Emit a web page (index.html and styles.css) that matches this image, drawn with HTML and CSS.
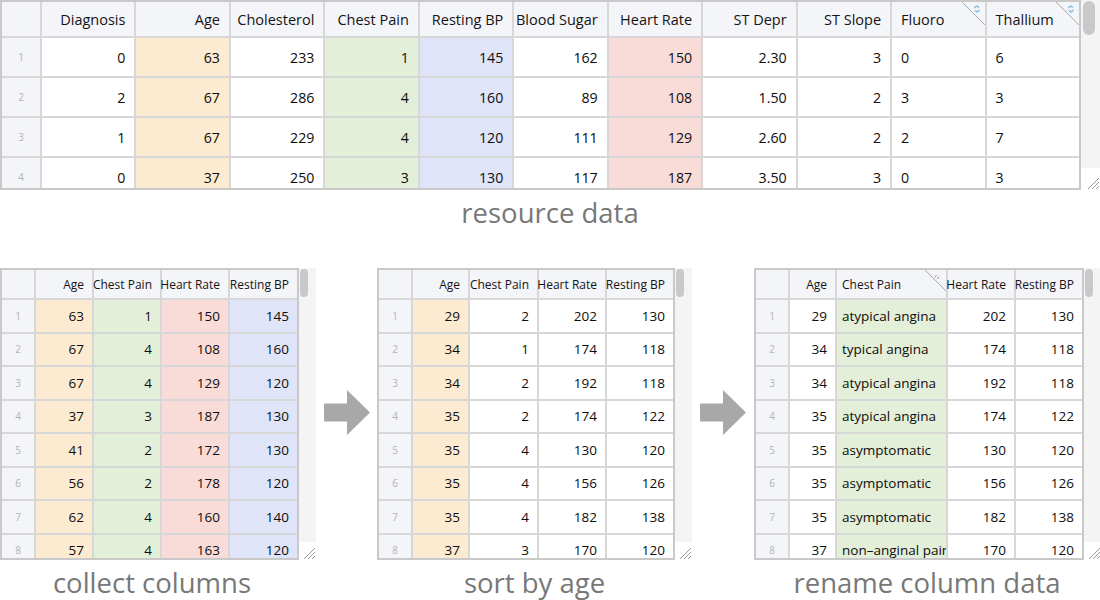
FILE: index.html
```html
<!DOCTYPE html>
<html>
<head>
<meta charset="utf-8">
<link rel="stylesheet" href="styles.css">
</head>
<body>
<div class="page">
  <section class="top">
    <div class="frame">
      <div class="sheet sheet-top">
        <div class="grid grid-top">
          <div class="c h n"></div>
          <div class="c h">Diagnosis</div>
          <div class="c h">Age</div>
          <div class="c h">Cholesterol</div>
          <div class="c h">Chest Pain</div>
          <div class="c h">Resting BP</div>
          <div class="c h">Blood Sugar</div>
          <div class="c h">Heart Rate</div>
          <div class="c h">ST Depr</div>
          <div class="c h">ST Slope</div>
          <div class="c h l mark">Fluoro<svg class="ico" viewBox="0 0 8 8" width="8" height="8"><path d="M1.6 3.2 A2.6 2.6 0 0 1 4.8 1.5" fill="none" stroke="#86bfe8" stroke-width="1.5"/><path d="M6.4 4.8 A2.6 2.6 0 0 1 3.2 6.5" fill="none" stroke="#86bfe8" stroke-width="1.5"/><path d="M4.2 0.3 L6.6 2 L4.5 3.2 Z M3.8 7.7 L1.4 6 L3.5 4.8 Z" fill="#86bfe8"/></svg></div>
          <div class="c h l mark">Thallium<svg class="ico" viewBox="0 0 8 8" width="8" height="8"><path d="M1.6 3.2 A2.6 2.6 0 0 1 4.8 1.5" fill="none" stroke="#86bfe8" stroke-width="1.5"/><path d="M6.4 4.8 A2.6 2.6 0 0 1 3.2 6.5" fill="none" stroke="#86bfe8" stroke-width="1.5"/><path d="M4.2 0.3 L6.6 2 L4.5 3.2 Z M3.8 7.7 L1.4 6 L3.5 4.8 Z" fill="#86bfe8"/></svg></div>

          <div class="c n">1</div><div class="c">0</div><div class="c age">63</div><div class="c">233</div><div class="c chest">1</div><div class="c bp">145</div><div class="c">162</div><div class="c hr">150</div><div class="c">2.30</div><div class="c">3</div><div class="c l">0</div><div class="c l">6</div>
          <div class="c n">2</div><div class="c">2</div><div class="c age">67</div><div class="c">286</div><div class="c chest">4</div><div class="c bp">160</div><div class="c">89</div><div class="c hr">108</div><div class="c">1.50</div><div class="c">2</div><div class="c l">3</div><div class="c l">3</div>
          <div class="c n">3</div><div class="c">1</div><div class="c age">67</div><div class="c">229</div><div class="c chest">4</div><div class="c bp">120</div><div class="c">111</div><div class="c hr">129</div><div class="c">2.60</div><div class="c">2</div><div class="c l">2</div><div class="c l">7</div>
          <div class="c n">4</div><div class="c">0</div><div class="c age">37</div><div class="c">250</div><div class="c chest">3</div><div class="c bp">130</div><div class="c">117</div><div class="c hr">187</div><div class="c">3.50</div><div class="c">3</div><div class="c l">0</div><div class="c l">3</div>
        </div>
      </div>
      <div class="vscroll vscroll-top">
        <div class="track"><div class="thumb"></div></div>
        <div class="grip"><svg viewBox="0 0 14 14" width="14" height="14"><path d="M2 13 L13 2 M6 13 L13 6 M10 13 L13 10" stroke="#9a9a9a" stroke-width="1"/></svg></div>
      </div>
    </div>
    <div class="cap">resource data</div>
  </section>

  <section class="bottom">
    <div class="panel">
      <div class="frame">
        <div class="sheet sheet-a">
          <div class="grid grid-sm cols-a">
            <div class="c h n"></div><div class="c h">Age</div><div class="c h">Chest Pain</div><div class="c h">Heart Rate</div><div class="c h">Resting BP</div>
            <div class="c n">1</div><div class="c age">63</div><div class="c chest">1</div><div class="c hr">150</div><div class="c bp">145</div>
            <div class="c n">2</div><div class="c age">67</div><div class="c chest">4</div><div class="c hr">108</div><div class="c bp">160</div>
            <div class="c n">3</div><div class="c age">67</div><div class="c chest">4</div><div class="c hr">129</div><div class="c bp">120</div>
            <div class="c n">4</div><div class="c age">37</div><div class="c chest">3</div><div class="c hr">187</div><div class="c bp">130</div>
            <div class="c n">5</div><div class="c age">41</div><div class="c chest">2</div><div class="c hr">172</div><div class="c bp">130</div>
            <div class="c n">6</div><div class="c age">56</div><div class="c chest">2</div><div class="c hr">178</div><div class="c bp">120</div>
            <div class="c n">7</div><div class="c age">62</div><div class="c chest">4</div><div class="c hr">160</div><div class="c bp">140</div>
            <div class="c n">8</div><div class="c age">57</div><div class="c chest">4</div><div class="c hr">163</div><div class="c bp">120</div>
          </div>
        </div>
        <div class="vscroll vscroll-sm">
          <div class="track"><div class="thumb"></div></div>
          <div class="grip"><svg viewBox="0 0 14 14" width="14" height="14"><path d="M2 13 L13 2 M6 13 L13 6 M10 13 L13 10" stroke="#9a9a9a" stroke-width="1"/></svg></div>
        </div>
      </div>
      <div class="cap cap-a">collect columns</div>
    </div>

    <div class="arrow"><svg viewBox="0 0 46 45" width="46" height="45"><polygon points="0,13.5 23,13.5 23,0 46,22.5 23,45 23,31.5 0,31.5" fill="#a8a8a8"/></svg></div>

    <div class="panel">
      <div class="frame">
        <div class="sheet sheet-b">
          <div class="grid grid-sm cols-b">
            <div class="c h n"></div><div class="c h">Age</div><div class="c h">Chest Pain</div><div class="c h">Heart Rate</div><div class="c h">Resting BP</div>
            <div class="c n">1</div><div class="c age">29</div><div class="c">2</div><div class="c">202</div><div class="c">130</div>
            <div class="c n">2</div><div class="c age">34</div><div class="c">1</div><div class="c">174</div><div class="c">118</div>
            <div class="c n">3</div><div class="c age">34</div><div class="c">2</div><div class="c">192</div><div class="c">118</div>
            <div class="c n">4</div><div class="c age">35</div><div class="c">2</div><div class="c">174</div><div class="c">122</div>
            <div class="c n">5</div><div class="c age">35</div><div class="c">4</div><div class="c">130</div><div class="c">120</div>
            <div class="c n">6</div><div class="c age">35</div><div class="c">4</div><div class="c">156</div><div class="c">126</div>
            <div class="c n">7</div><div class="c age">35</div><div class="c">4</div><div class="c">182</div><div class="c">138</div>
            <div class="c n">8</div><div class="c age">37</div><div class="c">3</div><div class="c">170</div><div class="c">120</div>
          </div>
        </div>
        <div class="vscroll vscroll-sm">
          <div class="track"><div class="thumb"></div></div>
          <div class="grip"><svg viewBox="0 0 14 14" width="14" height="14"><path d="M2 13 L13 2 M6 13 L13 6 M10 13 L13 10" stroke="#9a9a9a" stroke-width="1"/></svg></div>
        </div>
      </div>
      <div class="cap">sort by age</div>
    </div>

    <div class="arrow"><svg viewBox="0 0 46 45" width="46" height="45"><polygon points="0,13.5 23,13.5 23,0 46,22.5 23,45 23,31.5 0,31.5" fill="#a8a8a8"/></svg></div>

    <div class="panel">
      <div class="frame">
        <div class="sheet sheet-c">
          <div class="grid grid-sm cols-c">
            <div class="c h n"></div><div class="c h">Age</div><div class="c h l mark mark-gray">Chest Pain<svg class="tick" viewBox="0 0 6 6" width="6" height="6"><path d="M1 3.5 L2.5 1 M3.5 5 L5 2.5" stroke="#9a9a9a" stroke-width="1"/></svg></div><div class="c h">Heart Rate</div><div class="c h">Resting BP</div>
            <div class="c n">1</div><div class="c">29</div><div class="c l chest">atypical angina</div><div class="c">202</div><div class="c">130</div>
            <div class="c n">2</div><div class="c">34</div><div class="c l chest">typical angina</div><div class="c">174</div><div class="c">118</div>
            <div class="c n">3</div><div class="c">34</div><div class="c l chest">atypical angina</div><div class="c">192</div><div class="c">118</div>
            <div class="c n">4</div><div class="c">35</div><div class="c l chest">atypical angina</div><div class="c">174</div><div class="c">122</div>
            <div class="c n">5</div><div class="c">35</div><div class="c l chest">asymptomatic</div><div class="c">130</div><div class="c">120</div>
            <div class="c n">6</div><div class="c">35</div><div class="c l chest">asymptomatic</div><div class="c">156</div><div class="c">126</div>
            <div class="c n">7</div><div class="c">35</div><div class="c l chest">asymptomatic</div><div class="c">182</div><div class="c">138</div>
            <div class="c n">8</div><div class="c">37</div><div class="c l chest clip">non–anginal pain</div><div class="c">170</div><div class="c">120</div>
          </div>
        </div>
        <div class="vscroll vscroll-sm">
          <div class="track"><div class="thumb"></div></div>
          <div class="grip"><svg viewBox="0 0 14 14" width="14" height="14"><path d="M2 13 L13 2 M6 13 L13 6 M10 13 L13 10" stroke="#9a9a9a" stroke-width="1"/></svg></div>
        </div>
      </div>
      <div class="cap">rename column data</div>
    </div>
  </section>
</div>
</body>
</html>
```

FILE: styles.css
```css
* { box-sizing: border-box; }

body {
  margin: 0;
  background: #ffffff;
  font-family: "Open Sans", "Noto Sans", sans-serif;
  color: #111111;
}

.page {
  width: 1100px;
  height: 600px;
  overflow: hidden;
}

.frame {
  display: flex;
}

.sheet {
  border: 2px solid #c9c9c9;
  overflow: hidden;
  flex: none;
}

.grid {
  display: grid;
  gap: 2px;
  background: #d7d7d7;
}

.c {
  background: #ffffff;
  display: flex;
  align-items: center;
  justify-content: flex-end;
  padding: 0 9px;
  white-space: nowrap;
  min-width: 0;
  color: #0d0d0d;
}

.h {
  background: #f4f5f9;
  color: #141414;
}

.n {
  background: #f4f5f9;
  justify-content: center;
  padding: 0;
  font-size: 10px;
  color: #b3b3b3;
}

.l {
  justify-content: flex-start;
}

.clip {
  overflow: hidden;
}

.age { background: #fdebd1; }
.chest { background: #e3efd8; }
.bp { background: #dfe4f8; }
.hr { background: #f9dcd8; }

/* header corner markers */
.mark {
  position: relative;
}

.mark::after {
  content: "";
  position: absolute;
  top: 0;
  right: 0;
  width: 23px;
  height: 23px;
  background: linear-gradient(to top right, transparent calc(50% - 0.8px), #b4b4b4 50%, transparent calc(50% + 0.8px));
}

.ico {
  position: absolute;
  top: 3px;
  right: 4px;
}

.mark-gray::after {
  width: 21px;
  height: 21px;
}

.tick {
  position: absolute;
  top: 4px;
  right: 6px;
}

/* top sheet */
.sheet-top {
  width: 1081px;
  height: 190px;
}

.grid-top {
  grid-template-columns: 38px repeat(11, 1fr);
  grid-template-rows: 34px repeat(4, 38px);
  font-size: 14.2px;
}

.grid-top .h {
  font-size: 14.5px;
}

/* scrollbars */
.vscroll {
  display: flex;
  flex-direction: column;
  flex: none;
}

.track {
  flex: 1;
  background: #f4f4f4;
}

.thumb {
  background: #c9c9c9;
}

.grip {
  display: flex;
  justify-content: flex-end;
  align-items: flex-end;
  background: #ffffff;
}

.vscroll-top {
  width: 19px;
  height: 190px;
}

.vscroll-top .track {
  padding: 1px 5px 0 2px;
}

.vscroll-top .thumb {
  height: 34px;
  border-radius: 6px;
}

.vscroll-top .grip {
  height: 22px;
}

.vscroll-sm {
  width: 17px;
  height: 292px;
}

.vscroll-sm .track {
  padding: 1px 8px 0 1px;
}

.vscroll-sm .thumb {
  height: 28px;
  border-radius: 4px;
}

.vscroll-sm .grip {
  height: 18px;
}

/* captions */
.cap {
  height: 46px;
  line-height: 46px;
  text-align: center;
  font-size: 27.5px;
  color: #787878;
  white-space: nowrap;
}

.top .cap {
  margin-bottom: 32px;
}

.cap-a {
  padding-right: 12px;
}

/* bottom row */
.bottom {
  display: grid;
  grid-template-columns: 316px 61px 315px 62px 346px;
}

.panel {
  display: flex;
  flex-direction: column;
}

.arrow {
  margin-top: 122px;
  justify-self: center;
  height: 45px;
}

.arrow svg {
  display: block;
}

.grid-sm {
  grid-template-rows: 28px repeat(8, 31.5px);
  font-size: 13.5px;
}

.grid-sm .h {
  font-size: 12px;
  padding: 0 8px;
}

.grid-sm .c {
  padding: 0 8px;
}

.grid-sm .n {
  padding: 0;
}

.grid-sm .l {
  padding-left: 5px;
}

.sheet-a {
  width: 299px;
  height: 292px;
}

.cols-a {
  grid-template-columns: 32px 56px 66px 66px 67px;
}

.sheet-b {
  width: 298px;
  height: 292px;
}

.cols-b {
  grid-template-columns: 32px 55px 67px 66px 66px;
}

.sheet-c {
  width: 330px;
  height: 292px;
}

.cols-c {
  grid-template-columns: 32px 45px 109px 66px 66px;
}
```
